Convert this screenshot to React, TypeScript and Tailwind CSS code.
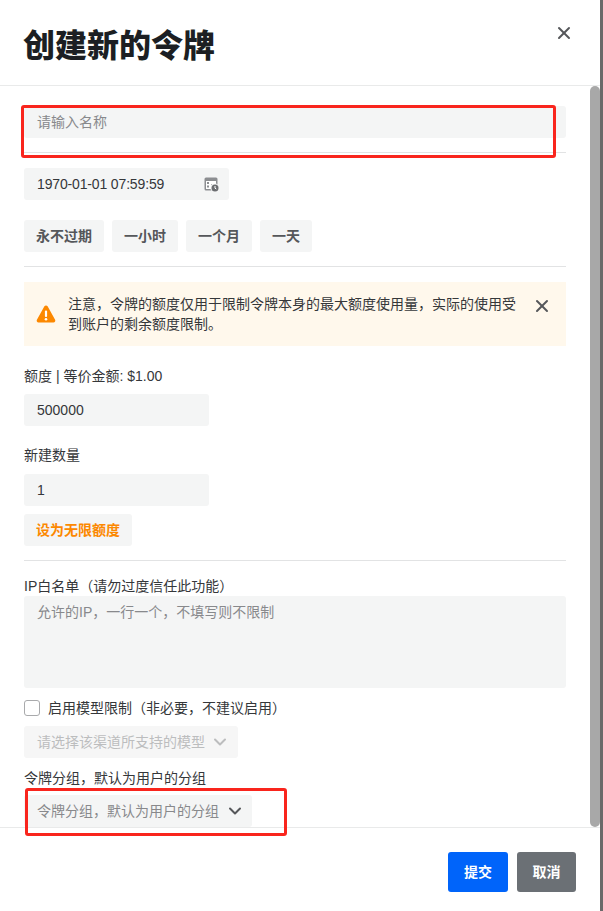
import { ChevronDown, X } from 'lucide-react';

const fieldBg = 'bg-[#f4f5f5]';

function Divider() {
  return <div className="h-px bg-[#e2e3e4]" />;
}

function DateIcon() {
  return (
    <svg width="16" height="16" viewBox="0 0 16 16" className="shrink-0">
      <path d="M3 1.5h10A1.5 1.5 0 0 1 14.5 3v5.5a4 4 0 0 0-6 6H3A1.5 1.5 0 0 1 1.5 13V3A1.5 1.5 0 0 1 3 1.5z" fill="#8c8e91" />
      <rect x="3" y="5" width="10" height="3" fill="#fff" />
      <rect x="3" y="8" width="5" height="5" fill="#fff" />
      <rect x="4" y="6" width="2" height="2" fill="#8c8e91" />
      <rect x="4" y="9.5" width="2" height="2" fill="#8c8e91" />
      <circle cx="12" cy="12" r="3.5" fill="#6b6d70" />
      <path d="M12 10v2.2l1.3.8" stroke="#fff" strokeWidth="1" fill="none" />
    </svg>
  );
}

function WarningIcon() {
  return (
    <svg width="20" height="20" viewBox="0 0 20 20" className="mt-[22px] shrink-0">
      <path
        d="M8.4 2.3c.7-1.2 2.5-1.2 3.2 0l7.5 13.5c.7 1.2-.2 2.7-1.6 2.7h-15c-1.4 0-2.3-1.5-1.6-2.7z"
        fill="#fc8800"
      />
      <rect x="8.9" y="6.5" width="2.2" height="6.5" rx="1" fill="#fff" />
      <circle cx="10" cy="15.2" r="1.3" fill="#fff" />
    </svg>
  );
}

export default function App() {
  return (
    <div className="h-[911px] w-[603px] overflow-hidden bg-[#6a6a6a] font-['Liberation_Sans','Noto_Sans_CJK_SC',sans-serif] text-sm text-[#35373a]">
      <div className="relative flex h-[911px] w-[600px] flex-col bg-white">
        <header className="flex h-[86px] shrink-0 items-start justify-between border-b border-[#e9eaea] pl-[23px] pr-[26px]">
          <h1 className="mt-6 text-[32px] leading-[44px] font-black text-[#1c1f23]">创建新的令牌</h1>
          <X size={20} strokeWidth={2.4} className="mt-[23px] text-[#55575a]" />
        </header>

        <main className="h-[741px] shrink-0 overflow-hidden pt-5 pl-6 pr-[34px]">
          <input
            placeholder="请输入名称"
            className={`block h-8 w-full rounded-[3px] px-[13px] pb-px outline-none placeholder:text-[#88898c] ${fieldBg}`}
          />
          <div className="mt-[14px]"><Divider /></div>

          <div className={`mt-[15px] flex h-8 w-[205px] items-center justify-between rounded-[3px] pl-[13px] pr-[10px] ${fieldBg}`}>
            <span className="tracking-[-0.15px]">1970-01-01 07:59:59</span>
            <DateIcon />
          </div>

          <div className="mt-5 flex gap-2 font-semibold text-[#55575a]">
            <button className={`h-8 rounded-[3px] px-3 ${fieldBg}`}>永不过期</button>
            <button className={`h-8 rounded-[3px] px-3 ${fieldBg}`}>一小时</button>
            <button className={`h-8 rounded-[3px] px-3 ${fieldBg}`}>一个月</button>
            <button className={`h-8 rounded-[3px] px-3 ${fieldBg}`}>一天</button>
          </div>

          <div className="mt-[14px]"><Divider /></div>

          <div className="mt-[15px] flex h-16 items-start bg-[#fff8ec] pl-3 pr-3">
            <WarningIcon />
            <p className="mt-[12px] ml-3 w-[450px] leading-[20px]">
              注意，令牌的额度仅用于限制令牌本身的最大额度使用量，实际的使用受到账户的剩余额度限制。
            </p>
            <X size={20} strokeWidth={2.4} className="mt-[14px] ml-[14px] shrink-0 text-[#55575a]" />
          </div>

          <label className="mt-5 block leading-5">额度 | 等价金额: $1.00</label>
          <div className={`mt-2 flex h-8 w-[185px] items-center rounded-[3px] px-[13px] ${fieldBg}`}>500000</div>

          <label className="mt-[19px] block leading-5">新建数量</label>
          <div className={`mt-[9px] flex h-8 w-[185px] items-center rounded-[3px] px-[13px] ${fieldBg}`}>1</div>

          <button className={`mt-2 block h-8 w-[108px] rounded-[3px] font-semibold text-[#fc8800] ${fieldBg}`}>设为无限额度</button>

          <div className="mt-[14px]"><Divider /></div>

          <label className="mt-[15px] block leading-5">IP白名单（请勿过度信任此功能）</label>
          <div className={`h-[92px] rounded-[3px] px-[13px] py-[6px] leading-5 text-[#88898c] ${fieldBg}`}>
            允许的IP，一行一个，不填写则不限制
          </div>

          <div className="mt-3 flex h-4 items-center gap-2">
            <span className="h-4 w-4 rounded-[3px] border border-[#a9aaac] bg-white" />
            <span>启用模型限制（非必要，不建议启用）</span>
          </div>

          <div className="mt-[10px] flex h-8 w-[214px] items-center justify-between rounded-[3px] bg-[#f6f6f6] pl-[13px] pr-2 text-[#bcbdbe]">
            <span>请选择该渠道所支持的模型</span>
            <ChevronDown size={20} strokeWidth={2.4} />
          </div>

          <label className="mt-[10px] block leading-5">令牌分组，默认为用户的分组</label>
          <div className={`mt-[7px] flex h-8 w-[228px] items-center justify-between rounded-[3px] pl-[13px] pr-[7px] text-[#88898c] ${fieldBg}`}>
            <span>令牌分组，默认为用户的分组</span>
            <ChevronDown size={20} strokeWidth={2.4} className="text-[#55575a]" />
          </div>
        </main>

        <footer className="flex flex-1 items-start justify-end gap-[9px] border-t border-[#e9eaea] pt-6 pr-6 font-semibold text-white">
          <button className="h-10 w-[60px] rounded-[3px] bg-[#0064fa]">提交</button>
          <button className="h-10 w-[59px] rounded-[3px] bg-[#6b7075]">取消</button>
        </footer>

        {/* scrollbar */}
        <div className="absolute top-[86px] left-[590px] h-[741px] w-[10px] rounded-t-md rounded-b-md bg-[#a8a8a8]" />

        {/* red annotation boxes */}
        <div className="absolute top-[105px] left-[21px] h-[53px] w-[535px] rounded-[3px] border-[3px] border-[#f9251d]" />
        <div className="absolute top-[788px] left-[25px] h-[48px] w-[262px] rounded-[3px] border-[3px] border-[#f9251d]" />
      </div>
    </div>
  );
}
